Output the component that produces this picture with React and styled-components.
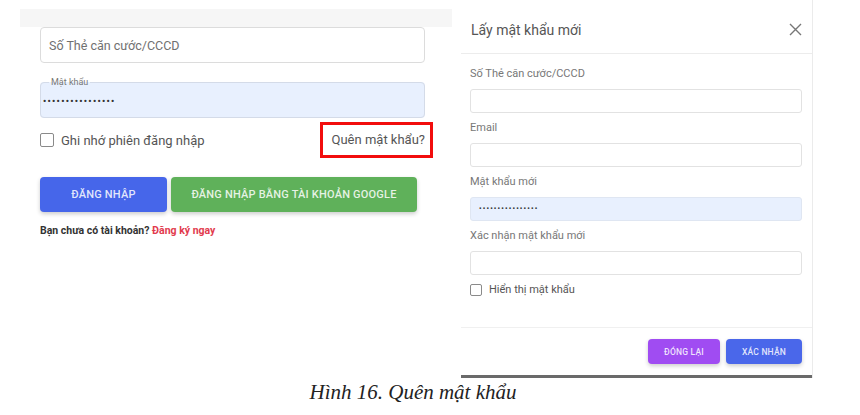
import React from "react";
import styled, { createGlobalStyle } from "styled-components";

const GlobalStyle = createGlobalStyle`
  html, body {
    margin: 0;
    padding: 0;
    background: #fff;
    font-family: Roboto, "Noto Sans", sans-serif;
  }
  * { box-sizing: border-box; }
`;

const Page = styled.div`
  width: 860px;
  height: 415px;
  overflow: hidden;
  background: #fff;
`;

const Figure = styled.div`
  display: flex;
  align-items: flex-start;
  padding-left: 20px;
`;

const LoginPanel = styled.div`
  width: 432px;
  margin-top: 9px;
  margin-right: 9px;
`;

const TopBand = styled.div`
  height: 18px;
  background: #f6f6f6;
`;

const LoginBody = styled.div`
  padding: 0 27px 0 20px;
`;

const TextBox = styled.div`
  height: 36px;
  border: 1px solid #dcdcdc;
  border-radius: 4px;
  display: flex;
  align-items: center;
  padding: 0 8px;
  font-size: 12.5px;
  color: #707070;
`;

const FieldSet = styled.fieldset`
  margin: 15px 0 0;
  height: 40px;
  border: 1px solid #d4dbe8;
  border-radius: 4px;
  background: #e8f0fe;
  padding: 0 0 0 2px;
  display: flex;
  align-items: center;

  legend {
    font-size: 9px;
    color: #777;
    padding: 0 2px;
    margin-left: 6px;
    line-height: 9px;
  }
`;

const Dots = styled.span`
  font-size: ${(p) => p.$size}px;
  font-weight: 700;
  color: #333;
  letter-spacing: ${(p) => p.$spacing}px;
  line-height: 1;
  margin-top: ${(p) => p.$offset || 0}px;
`;

const OptionRow = styled.div`
  display: flex;
  align-items: center;
  justify-content: space-between;
  margin-top: 4px;
  margin-right: -8px;
`;

const CheckLabel = styled.label`
  display: flex;
  align-items: center;
  gap: ${(p) => p.$gap}px;
  font-size: ${(p) => p.$size}px;
  color: #555;
`;

const Box = styled.span`
  width: ${(p) => p.$s}px;
  height: ${(p) => p.$s}px;
  border: 1.5px solid #8a8a8a;
  border-radius: 2px;
  background: #fff;
`;

const ForgotLink = styled.span`
  border: 3px solid #f20d0d;
  padding: 7px 5px 8px 9px;
  font-size: 13px;
  color: #555;
`;

const ButtonRow = styled.div`
  display: flex;
  gap: 4px;
  margin-top: 19px;
`;

const Button = styled.button`
  height: ${(p) => p.$h}px;
  width: ${(p) => p.$w}px;
  border: none;
  border-radius: 4px;
  background: ${(p) => p.$bg};
  font-family: Roboto, sans-serif;
  font-size: ${(p) => p.$fs}px;
  font-weight: 500;
  text-transform: uppercase;
  letter-spacing: 0.2px;
  box-shadow: 0 2px 4px rgba(0, 0, 0, 0.2);
  padding: 0;
  color: rgba(255, 255, 255, 0.85);
`;

const SignupText = styled.div`
  margin-top: 12px;
  font-size: 10.5px;
  font-weight: 700;
  color: #333;

  span {
    color: #e23b4e;
  }
`;

const Modal = styled.div`
  width: 351px;
  border-bottom: 3px solid #6a6a6a;
  box-shadow: 1px 0 0 rgba(0, 0, 0, 0.08);
  background: #fff;
`;

const ModalHeader = styled.div`
  height: 54px;
  padding: 6px 10px 0;
  display: flex;
  align-items: center;
  justify-content: space-between;
  border-bottom: 1px solid #ececec;
`;

const ModalTitle = styled.h3`
  margin: 0;
  font-size: 14px;
  font-weight: 400;
  color: #555;
`;

const CloseButton = styled.span`
  display: flex;
`;

const ModalBody = styled.div`
  padding: 13px 10px 31px 9px;
`;

const Label = styled.div`
  font-size: 11px;
  line-height: 14px;
  color: #777;
`;

const SmallInput = styled.div`
  height: 24px;
  margin: 8px 0 8px;
  border: 1px solid ${(p) => (p.$filled ? "#dfe6f2" : "#e2e2e2")};
  border-radius: 3px;
  background: ${(p) => (p.$filled ? "#e8f0fe" : "#fff")};
  display: flex;
  align-items: center;
  padding-left: 8px;
`;

const ModalFooter = styled.div`
  border-top: 1px solid #f0f0f0;
  display: flex;
  justify-content: flex-end;
  gap: 6px;
  padding: 11px 10px 11px;
`;

const Caption = styled.div`
  margin-top: 2px;
  padding-right: 34px;
  text-align: center;
  font-family: "Liberation Serif", serif;
  font-style: italic;
  font-size: 21px;
  color: #222;
`;

const fields = [
  { label: "Số Thẻ căn cước/CCCD" },
  { label: "Email" },
  { label: "Mật khẩu mới", filled: true },
  { label: "Xác nhận mật khẩu mới" },
];

export default function App() {
  return (
    <Page>
      <GlobalStyle />
      <Figure>
        <LoginPanel>
          <TopBand />
          <LoginBody>
            <TextBox>Số Thẻ căn cước/CCCD</TextBox>
            <FieldSet>
              <legend>Mật khẩu</legend>
              <Dots $size={9} $spacing={1.3} $offset={-2}>
                ••••••••••••••••
              </Dots>
            </FieldSet>
            <OptionRow>
              <CheckLabel $gap={7} $size={13}>
                <Box $s={14} />
                Ghi nhớ phiên đăng nhập
              </CheckLabel>
              <ForgotLink>Quên mật khẩu?</ForgotLink>
            </OptionRow>
            <ButtonRow>
              <Button $w={127} $h={35} $fs={11} $bg="#4666ea">
                Đăng nhập
              </Button>
              <Button $w={246} $h={35} $fs={11} $bg="#5fb15a">
                Đăng nhập bằng tài khoản Google
              </Button>
            </ButtonRow>
            <SignupText>
              Bạn chưa có tài khoản? <span>Đăng ký ngay</span>
            </SignupText>
          </LoginBody>
        </LoginPanel>

        <Modal>
          <ModalHeader>
            <ModalTitle>Lấy mật khẩu mới</ModalTitle>
            <CloseButton>
              <svg width="13" height="13" viewBox="0 0 13 13">
                <path d="M1 1L12 12M12 1L1 12" stroke="#777" strokeWidth="1.4" />
              </svg>
            </CloseButton>
          </ModalHeader>
          <ModalBody>
            {fields.map((f) => (
              <div key={f.label}>
                <Label>{f.label}</Label>
                <SmallInput $filled={f.filled}>
                  {f.filled && (
                    <Dots $size={7} $spacing={1.2}>
                      ••••••••••••••••
                    </Dots>
                  )}
                </SmallInput>
              </div>
            ))}
            <CheckLabel $gap={7} $size={11}>
              <Box $s={12} />
              Hiển thị mật khẩu
            </CheckLabel>
          </ModalBody>
          <ModalFooter>
            <Button $w={72} $h={25} $fs={8.5} $bg="#a04cf2">
              Đóng lại
            </Button>
            <Button $w={76} $h={25} $fs={8.5} $bg="#4a67ea">
              Xác nhận
            </Button>
          </ModalFooter>
        </Modal>
      </Figure>
      <Caption>Hình 16. Quên mật khẩu</Caption>
    </Page>
  );
}
